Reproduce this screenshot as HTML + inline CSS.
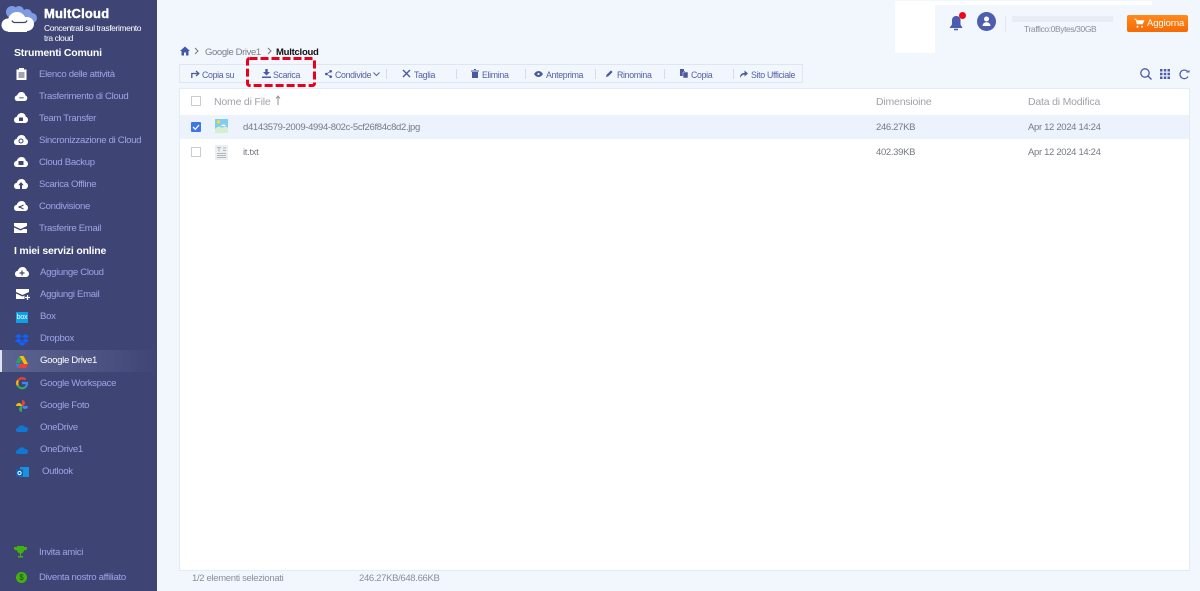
<!DOCTYPE html>
<html><head><meta charset="utf-8"><style>
*{box-sizing:border-box;margin:0;padding:0}
html,body{width:1200px;height:591px;overflow:hidden;background:#f2f6fd;font-family:"Liberation Sans",sans-serif}
.a{position:absolute;white-space:nowrap}
#side{position:absolute;left:0;top:0;width:157px;height:591px;background:#3e4575}
.it{position:absolute;font-size:9.6px;letter-spacing:-.33px;color:#9ea5e6;white-space:nowrap;line-height:12px;margin-top:1px}
.h{position:absolute;left:14px;font-size:10.5px;font-weight:bold;color:#fff;letter-spacing:-.2px;line-height:13px;margin-top:1px}
svg{position:absolute;overflow:visible}
.tb{position:absolute;top:69px;font-size:8.8px;letter-spacing:-.33px;color:#5361a8;line-height:12px;white-space:nowrap}
.sep{position:absolute;top:69px;width:1px;height:10px;background:#d5dcec}
.g{color:#8b8f99}
.f{font-size:9.5px;letter-spacing:-.33px;color:#767a84;line-height:12px}
.th{top:96px;font-size:10.5px;letter-spacing:-.2px;color:#9fa3ab;line-height:13px}
</style></head><body>
<div id="side"></div>
<svg style="left:0;top:0" width="40" height="34" viewBox="0 0 40 34"><circle cx="12" cy="12" r="6" fill="#7d9be0"/><circle cx="19" cy="11" r="5" fill="#7d9be0"/><circle cx="27" cy="14" r="5" fill="#7d9be0"/><circle cx="32" cy="18" r="5" fill="#7d9be0"/><circle cx="17" cy="21" r="9" fill="#fff"/><circle cx="8" cy="25" r="6.500" fill="#fff"/><circle cx="27" cy="24" r="7" fill="#fff"/><path d="M8 24h19v8H8z" fill="#fff"/><path d="M12 20.500c.5 1.500 1.500 2 3 2h9c1.500 0 2.500-.5 3-2" stroke="#3e4575" stroke-width="1.200" fill="none"/></svg>
<div class="a" style="left:44px;top:6px;font-size:13px;font-weight:bold;color:#fff;letter-spacing:.2px;-webkit-text-stroke:.4px #fff;line-height:15px">MultCloud</div>
<div class="a" style="left:44px;top:24px;font-size:8.500px;letter-spacing:-.4px;color:#fff;line-height:9.500px">Concentrati sul trasferimento<br>tra cloud</div>
<div class="h" style="top:46px">Strumenti Comuni</div>
<div class="h" style="top:244px">I miei servizi online</div>

<svg style="left:16px;top:68px" width="12" height="12"><path d="M.5 1.500h10v10.500H.5z" fill="#fff"/><path d="M3 0h5v2.500H3z" fill="#fff"/><path d="M2.500 5h6M2.500 7h6M2.500 9h6" stroke="#3e4575"/></svg>
<div class="it" style="left:39px;top:68px">Elenco delle attività</div>
<svg style="left:14px;top:92px" width="14" height="9" viewBox="0 0 14 10"><path d="M3 10C1 10 0 8.500 0 7c0-1.800 1.200-3 2.800-3.200C3.500 1.500 5.300 0 7.500 0c2.500 0 4 1.700 4.300 3.700 1.300.3 2.200 1.500 2.200 3 0 1.800-1.300 3.300-3 3.300z" fill="#fff"/><path d="M5 6.500h5" stroke="#3e4575"/></svg>
<div class="it" style="left:39px;top:90px">Trasferimento di Cloud</div>
<svg style="left:14px;top:113px" width="14" height="10"><path d="M3 10C1 10 0 8.500 0 7c0-1.800 1.200-3 2.800-3.200C3.500 1.500 5.300 0 7.500 0c2.500 0 4 1.700 4.300 3.700 1.300.3 2.200 1.500 2.200 3 0 1.800-1.300 3.300-3 3.300z" fill="#fff"/><path d="M5 4.500h4v3.500H5z" fill="#3e4575"/></svg>
<div class="it" style="left:39px;top:112px">Team Transfer</div>
<svg style="left:14px;top:135px" width="14" height="10"><path d="M3 10C1 10 0 8.500 0 7c0-1.800 1.200-3 2.800-3.200C3.500 1.500 5.300 0 7.500 0c2.500 0 4 1.700 4.300 3.700 1.300.3 2.200 1.500 2.200 3 0 1.800-1.300 3.300-3 3.300z" fill="#fff"/><circle cx="7" cy="6" r="2" stroke="#3e4575" fill="none"/></svg>
<div class="it" style="left:39px;top:134px">Sincronizzazione di Cloud</div>
<svg style="left:14px;top:157px" width="14" height="10"><path d="M3 10C1 10 0 8.500 0 7c0-1.800 1.200-3 2.800-3.200C3.500 1.500 5.300 0 7.500 0c2.500 0 4 1.700 4.300 3.700 1.300.3 2.200 1.500 2.200 3 0 1.800-1.300 3.300-3 3.300z" fill="#fff"/><path d="M4.500 4h5v4h-5z" fill="#3e4575"/></svg>
<div class="it" style="left:39px;top:156px">Cloud Backup</div>
<svg style="left:14px;top:179px" width="14" height="10"><path d="M3 10C1 10 0 8.500 0 7c0-1.800 1.200-3 2.800-3.200C3.500 1.500 5.300 0 7.500 0c2.500 0 4 1.700 4.300 3.700 1.300.3 2.200 1.500 2.200 3 0 1.800-1.300 3.300-3 3.300z" fill="#fff"/><path d="M7 3l2.700 3.200H8V10H6V6.200H4.300z" fill="#3e4575"/></svg>
<div class="it" style="left:39px;top:178px">Scarica Offline</div>
<svg style="left:14px;top:201px" width="14" height="10"><path d="M3 10C1 10 0 8.500 0 7c0-1.800 1.200-3 2.800-3.200C3.500 1.500 5.300 0 7.500 0c2.500 0 4 1.700 4.300 3.700 1.300.3 2.200 1.500 2.200 3 0 1.800-1.300 3.300-3 3.300z" fill="#fff"/><path d="M9.500 4L5.500 6 9.500 8" stroke="#3e4575" fill="none"/><circle cx="5.500" cy="6" r="1" fill="#3e4575"/></svg>
<div class="it" style="left:39px;top:200px">Condivisione</div>
<svg style="left:14px;top:223px" width="14" height="11"><path d="M0 0h13v3L6.500 6 0 3zM0 4.500l6.500 3 3-1.500H13v4H0z" fill="#fff"/></svg>
<div class="it" style="left:39px;top:222px">Trasferire Email</div>

<svg style="left:15px;top:267px" width="14" height="10"><path d="M3 10C1 10 0 8.500 0 7c0-1.800 1.200-3 2.800-3.200C3.500 1.500 5.300 0 7.500 0c2.500 0 4 1.700 4.300 3.700 1.300.3 2.200 1.500 2.200 3 0 1.800-1.300 3.300-3 3.300z" fill="#fff"/><path d="M7 3.500v5M4.500 6h5" stroke="#3e4575" stroke-width="1.200"/></svg>
<div class="it" style="left:40px;top:266px">Aggiunge Cloud</div>
<svg style="left:16px;top:289px" width="14" height="11"><path d="M0 0h13v3L6.500 6 0 3zM0 4.500l6.500 3 2-1V10H0z" fill="#fff"/><path d="M9 8.500h5M11.500 6v5" stroke="#fff" stroke-width="1.200"/></svg>
<div class="it" style="left:40px;top:288px">Aggiungi Email</div>
<div class="a" style="left:16px;top:312px;width:12px;height:11px;background:#0f9fe6"></div>
<div class="a" style="left:16px;top:313px;width:12px;font-size:7px;letter-spacing:-.2px;color:#fff;text-align:center;line-height:9px">box</div>
<div class="it" style="left:40px;top:310px">Box</div>
<svg style="left:15px;top:334px" width="14" height="12"><path d="M3.500 0L7 2.200 3.500 4.500 0 2.200zM10.500 0L14 2.200 10.500 4.500 7 2.200zM3.500 4.500L7 6.700 3.500 9 0 6.700zM10.500 4.500L14 6.700 10.500 9 7 6.700zM3.600 9.800L7 7.500l3.400 2.300L7 12z" fill="#0f62fe"/></svg>
<div class="it" style="left:40px;top:332px">Dropbox</div>
<div class="a" style="left:0;top:350px;width:157px;height:22px;background:linear-gradient(90deg,#5e6490,#4a5080 70%,#3e4575)"></div>
<div class="a" style="left:0;top:350px;width:2px;height:22px;background:#dfe2f2"></div>
<svg style="left:15px;top:356px" width="13" height="12"><path d="M4.500 0h4l-4 7H.5z" fill="#22a565"/><path d="M8.500 0l4.500 8H9L4.500 0z" fill="#fbbc04"/><path d="M2.500 12L4.500 8H13l-2 4z" fill="#ea4335"/><path d="M2.500 12L.5 8 4.500 8z" fill="#2684fc"/></svg>
<div class="it" style="left:40px;top:354px;color:#fff">Google Drive1</div>
<svg style="left:16px;top:377px" width="12" height="12" viewBox="0 0 12 12" fill="none" stroke-width="2.200"><path d="M2 3.500A5 5 0 0 1 9.500 2.500" stroke="#ea4335"/><path d="M1.800 8.500A5 5 0 0 1 2 3.500" stroke="#fbbc04"/><path d="M9.500 10A5 5 0 0 1 1.800 8.500" stroke="#34a853"/><path d="M6 6h5a5 5 0 0 1-1.500 4" stroke="#4285f4"/></svg>
<div class="it" style="left:40px;top:377px">Google Workspace</div>
<svg style="left:16px;top:400px" width="12" height="12"><path d="M6 6V0a3 3 0 0 1 0 6z" fill="#ea4335"/><path d="M6 6h6a3 3 0 0 1-6 0z" fill="#4285f4"/><path d="M6 6v6a3 3 0 0 1 0-6z" fill="#34a853"/><path d="M6 6H0a3 3 0 0 1 6 0z" fill="#fbbc04"/></svg>
<div class="it" style="left:40px;top:399px">Google Foto</div>
<svg style="left:16px;top:425px" width="12" height="7"><path d="M2 7a2 2 0 0 1 0-4A4 4 0 0 1 9 2a2.500 2.500 0 0 1 1 5z" fill="#0f78d4"/></svg>
<div class="it" style="left:40px;top:421px">OneDrive</div>
<svg style="left:16px;top:447px" width="12" height="7"><path d="M2 7a2 2 0 0 1 0-4A4 4 0 0 1 9 2a2.500 2.500 0 0 1 1 5z" fill="#0f78d4"/></svg>
<div class="it" style="left:40px;top:443px">OneDrive1</div>
<svg style="left:16px;top:467px" width="13" height="11"><path d="M4 0h9v10H4z" fill="#1a8fdc"/><path d="M0 2.500h7v7H0z" fill="#0d62b8"/><circle cx="3.500" cy="6" r="1.600" fill="none" stroke="#fff"/></svg>
<div class="it" style="left:42px;top:465px">Outlook</div>

<svg style="left:14px;top:546px" width="13" height="12"><path d="M3 0h7v4a3.500 3.500 0 0 1-7 0zM0 1h3v3a2 2 0 0 1-3-1.500zM13 1h-3v3a2 2 0 0 0 3-1.500zM6 7h1v3h2v1.500H4V10h2z" fill="#42b30e"/></svg>
<div class="it" style="left:39px;top:546px">Invita amici</div>
<div class="a" style="left:16px;top:572px;width:11px;height:11px;border-radius:50%;background:#42b30e;color:#2a5a20;font-size:8px;line-height:11px;text-align:center;font-weight:bold">$</div>
<div class="it" style="left:39px;top:571px">Diventa nostro affiliato</div>

<div class="a" style="left:895px;top:1px;width:257px;height:4px;background:#fff"></div>
<div class="a" style="left:895px;top:1px;width:40px;height:52px;background:#fff"></div>
<svg style="left:949px;top:13px" width="22" height="20"><path d="M7 2a4 4 0 0 1 4.500 4v4.500L13.500 14H.5L3 10.500V6A4 4 0 0 1 7 2z" fill="#4a5bb0" transform="translate(0,1)"/><path d="M5 16.500h4" stroke="#4a5bb0" stroke-width="1.500"/><circle cx="13.500" cy="2.500" r="3.500" fill="#f0071a"/></svg>
<div class="a" style="left:977px;top:12px;width:19px;height:19px;border-radius:50%;background:#4d5db0"></div>
<svg style="left:977px;top:12px" width="19" height="19"><circle cx="9.500" cy="7" r="2.500" fill="#fff"/><path d="M5.500 14c0-5 8-5 8 0z" fill="#fff"/></svg>
<div class="a" style="left:1005px;top:16px;width:1px;height:16px;background:#e3e8f1"></div>
<div class="a" style="left:1012px;top:16px;width:101px;height:6px;background:#e8edf5"></div>
<div class="a g" style="left:1024px;top:24px;font-size:8.500px;letter-spacing:-.4px;line-height:11px">Traffico:0Bytes/30GB</div>
<div class="a" style="left:1127px;top:15px;width:61px;height:17px;border-radius:2px;background:linear-gradient(#ff8a1a,#f56a05)"></div>
<svg style="left:1134px;top:19px" width="10" height="9"><path d="M0 0h2l1 5h5.500L10 1.500H2.500" fill="#fff" stroke="#fff" stroke-width=".6"/><circle cx="3.500" cy="7.800" r="1" fill="#fff"/><circle cx="8" cy="7.800" r="1" fill="#fff"/></svg>
<div class="a" style="left:1147px;top:18px;font-size:9.500px;letter-spacing:-.1px;color:#fff;line-height:12px">Aggiorna</div>

<svg style="left:180px;top:46px" width="10" height="10"><path d="M5 .5L10 5H8.500v4.500H6V6.500H4v3H1.500V5H0z" fill="#4058a8"/></svg>
<svg style="left:194px;top:47px" width="5" height="8"><path d="M1 1l3 3-3 3" stroke="#777" fill="none"/></svg>
<div class="a" style="left:205px;top:46px;font-size:9.500px;letter-spacing:-.38px;color:#7a7f8a;line-height:12px;margin-top:1px">Google Drive1</div>
<svg style="left:267px;top:47px" width="5" height="8"><path d="M1 1l3 3-3 3" stroke="#777" fill="none"/></svg>
<div class="a" style="left:276px;top:46px;font-size:9.500px;letter-spacing:-.25px;font-weight:bold;color:#111;line-height:12px;margin-top:1px">Multcloud</div>

<div class="a" style="left:179px;top:64px;width:624px;height:19px;background:#f2f6fd;border:1px solid #dfe6f1"></div>
<svg style="left:191px;top:70px" width="9" height="8"><path d="M.8 8V3.500h6M5 1l2.800 2.500L5 6" stroke="#4a5a9f" stroke-width="1.300" fill="none"/></svg>
<div class="tb" style="left:202px">Copia su</div>
<svg style="left:262px;top:69px" width="9" height="9"><path d="M3.300 0h2.400v3H8L4.500 6.500 1 3h2.300zM0 7.500h9V9H0z" fill="#4a5a9f"/></svg>
<div class="tb" style="left:273px">Scarica</div>
<svg style="left:325px;top:70px" width="7" height="8"><circle cx="1.300" cy="4" r="1.300" fill="#4a5a9f"/><circle cx="5.700" cy="1.300" r="1.300" fill="#4a5a9f"/><circle cx="5.700" cy="6.700" r="1.300" fill="#4a5a9f"/><path d="M5.700 1.300L1.300 4l4.400 2.700" stroke="#4a5a9f" stroke-width=".7" fill="none"/></svg>
<div class="tb" style="left:335px">Condivide</div>
<svg style="left:373px;top:72px" width="7" height="5"><path d="M.5.500L3.500 3.500 6.500.5" stroke="#5361a8" fill="none"/></svg>
<div class="sep" style="left:386px"></div>
<svg style="left:402px;top:69px" width="9" height="9"><path d="M1 1l7 7M8 1L1 8" stroke="#4a5a9f" stroke-width="1.400"/></svg>
<div class="tb" style="left:414px">Taglia</div>
<div class="sep" style="left:456px"></div>
<svg style="left:471px;top:69px" width="8" height="9"><path d="M0 1.500h8v1H0zM3 0h2v1H3zM1 3h6v6H1z" fill="#4a5a9f"/></svg>
<div class="tb" style="left:482px">Elimina</div>
<div class="sep" style="left:525px"></div>
<svg style="left:534px;top:71px" width="9" height="6"><path d="M0 3c2.500-4 6.500-4 9 0-2.500 4-6.500 4-9 0z" fill="#4a5a9f"/><circle cx="4.500" cy="3" r="1.100" fill="#f2f6fd"/></svg>
<div class="tb" style="left:546px">Anteprima</div>
<div class="sep" style="left:595px"></div>
<svg style="left:606px;top:70px" width="7" height="7"><path d="M0 7l.6-2.200L5 .4 6.600 2 2.200 6.400z" fill="#4a5a9f"/></svg>
<div class="tb" style="left:617px">Rinomina</div>
<div class="sep" style="left:664px"></div>
<svg style="left:680px;top:69px" width="8" height="9"><path d="M0 0h4v2h1v5H0z" fill="#4a5a9f"/><path d="M3 3h5v6H3z" fill="#4a5a9f" stroke="#f2f6fd" stroke-width=".5"/></svg>
<div class="tb" style="left:691px">Copia</div>
<div class="sep" style="left:733px"></div>
<svg style="left:740px;top:70px" width="8" height="8"><path d="M0 8c0-4 2-5 4.500-5V.5L8 3.500 4.500 6.500V4.500C3 4.500 1.500 5.500 0 8z" fill="#4a5a9f"/></svg>
<div class="tb" style="left:751px">Sito Ufficiale</div>

<svg style="left:246px;top:57px" width="70" height="30"><rect x="1.500" y="1.500" width="67" height="27" rx="2" fill="none" stroke="#e8001c" stroke-width="3" stroke-dasharray="8 3"/></svg>

<svg style="left:1140px;top:68px" width="12" height="12"><circle cx="5" cy="5" r="4.200" stroke="#4a5ba8" stroke-width="1.300" fill="none"/><path d="M8 8l3.500 3.500" stroke="#4a5ba8" stroke-width="1.300"/></svg>
<svg style="left:1160px;top:69px" width="10" height="10" fill="#4a5ba8"><path d="M0 0h2.500v2.500H0zM3.800 0h2.500v2.500H3.800zM7.500 0H10v2.500H7.500zM0 3.800h2.500v2.500H0zM3.800 3.800h2.500v2.500H3.800zM7.500 3.800H10v2.500H7.500zM0 7.500h2.500V10H0zM3.800 7.500h2.500V10H3.800zM7.500 7.500H10V10H7.500z"/></svg>
<svg style="left:1179px;top:69px" width="11" height="10"><path d="M9 7.500A4.300 4.300 0 1 1 8.500 2.500" stroke="#4a5ba8" stroke-width="1.200" fill="none"/><path d="M7 3.500h3.500V1z" fill="#4a5ba8"/></svg>

<div class="a" style="left:179px;top:88px;width:1011px;height:483px;background:#fff;border:1px solid #e2ebf8"></div>
<div class="a" style="left:180px;top:115px;width:1009px;height:24px;background:#ecf3fd"></div>
<div class="a" style="left:191px;top:96px;width:10px;height:10px;border:1px solid #ccc;background:#fff"></div>
<div class="a th" style="left:214px">Nome di File</div>
<svg style="left:275px;top:95px" width="6" height="10"><path d="M3 10V1.500M1 3.500L3 1l2 2.500" stroke="#8a8f99" fill="none"/></svg>
<div class="a th" style="left:876px">Dimensioine</div>
<div class="a th" style="left:1028px">Data di Modifica</div>

<div class="a" style="left:191px;top:122px;width:10px;height:10px;background:#3d76e8;border-radius:1px"></div>
<svg style="left:191px;top:122px" width="10" height="10"><path d="M2 5l2.300 2.300L8 3" stroke="#fff" stroke-width="1.300" fill="none"/></svg>
<svg style="left:215px;top:119px" width="13" height="14"><path d="M0 0h13v14H0z" fill="#7fcdf2"/><circle cx="3.500" cy="3" r="1.700" fill="#fdd835"/><path d="M0 14v-4c3-3 5-3 7-1 2-2 4-2 6 0v5z" fill="#d8eecf"/><path d="M6 7c1-2 4-2 5 0z" fill="#fff"/></svg>
<div class="a f" style="left:243px;top:122px">d4143579-2009-4994-802c-5cf26f84c8d2.jpg</div>
<div class="a f" style="left:876px;top:122px">246.27KB</div>
<div class="a f" style="left:1028px;top:122px">Apr 12 2024 14:24</div>

<div class="a" style="left:191px;top:147px;width:10px;height:10px;border:1px solid #ccc;background:#fff"></div>
<svg style="left:215px;top:145px" width="13" height="15"><path d="M0 0h13v15H0z" fill="#eceef0"/><path d="M2 2.500h4M4 2.500v4M8 3h3M8 5.500h3M2 8.500h9M2 10.500h9M2 12.500h9" stroke="#b4b8be"/></svg>
<div class="a f" style="left:243px;top:147px">it.txt</div>
<div class="a f" style="left:876px;top:147px">402.39KB</div>
<div class="a f" style="left:1028px;top:147px">Apr 12 2024 14:24</div>

<div class="a f g" style="left:192px;top:573px;color:#8b8f99">1/2 elementi selezionati</div>
<div class="a f g" style="left:359px;top:573px;color:#8b8f99">246.27KB/648.66KB</div>
</body></html>
